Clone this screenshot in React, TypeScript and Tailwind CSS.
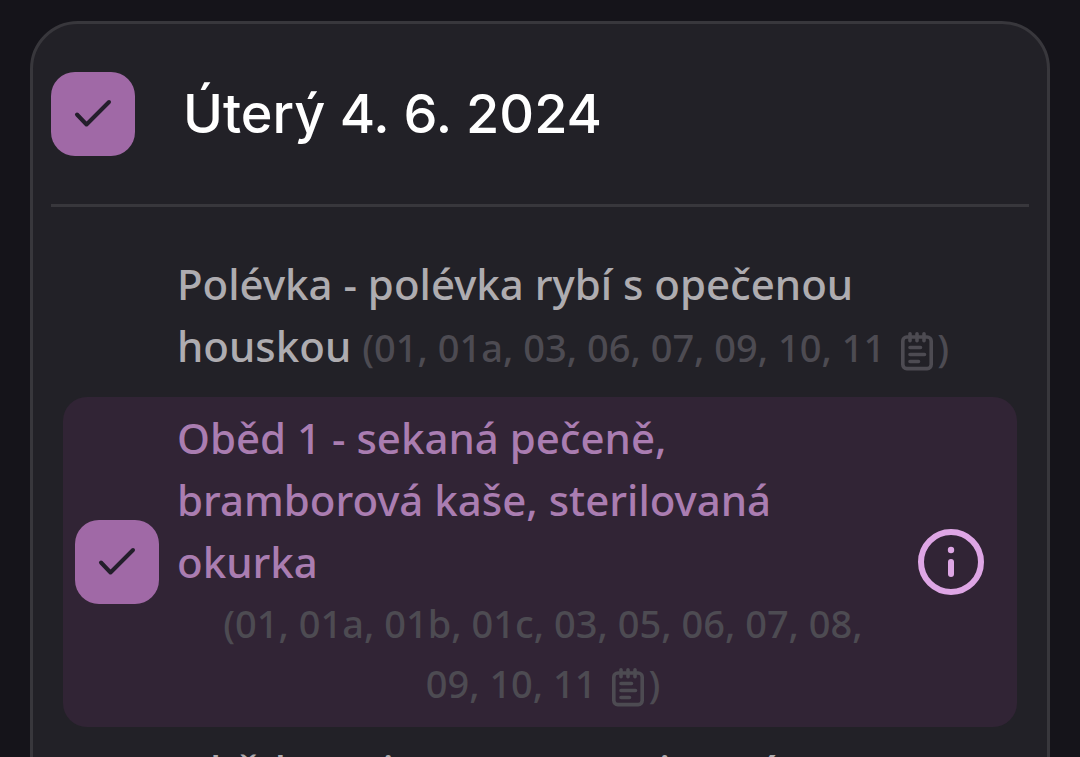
import { useId } from "react";
import type { ReactNode } from "react";

interface CheckProps {
  label: string;
}

function CheckBox({ label }: CheckProps) {
  const id = useId();

  return (
    <label htmlFor={id} aria-label={label} className="relative block size-21 shrink-0">
      <input
        id={id}
        type="checkbox"
        aria-label={label}
        defaultChecked
        className="peer block size-21 appearance-none rounded-3xl bg-[#412b48] checked:bg-[#a069a6]"
      />
      <svg
        viewBox="0 0 84 84"
        fill="none"
        stroke="#231e2b"
        strokeWidth="4"
        strokeLinecap="round"
        strokeLinejoin="round"
        className="pointer-events-none absolute inset-0 hidden size-21 peer-checked:block"
      >
        <path d="M26 42.5 35.5 52.5 58 30" />
      </svg>
    </label>
  );
}

function NotesIcon() {
  return (
    <svg
      viewBox="0 0 32 40"
      fill="none"
      stroke="currentColor"
      strokeWidth="3.6"
      strokeLinecap="round"
      strokeLinejoin="round"
      className="mr-1 ml-1.5 inline-block h-10 w-8 align-middle"
    >
      <rect x="1.8" y="5" width="28.4" height="31.6" rx="4" />
      <path d="M9 1.8v7M16 1.8v7M23 1.8v7M9 15.5h10.5M9 22.5h14.5M9 29.5h8.5" />
    </svg>
  );
}

function Allergens({ codes }: { codes: string }) {
  return (
    <button type="button" className="inline text-[38px] leading-15 font-medium text-[#4d4b52]">
      ({codes} <NotesIcon />)
    </button>
  );
}

interface MealProps {
  children: ReactNode;
  ordered?: boolean;
}

function Meal({ children, ordered }: MealProps) {
  return (
    <li
      className={
        ordered
          ? "flex items-center rounded-3xl bg-[#312435] px-3 py-2.5 text-[#aa7db1]"
          : "flex items-center px-3 pt-2 pb-[11px] text-[#aeacb0]"
      }
    >
      <div className="w-25.5 shrink-0">{ordered && <CheckBox label="Oběd 1" />}</div>
      <div className="min-w-0 flex-1 pb-1 text-[42px] leading-[62px] font-medium">{children}</div>
      {ordered && (
        <button type="button" aria-label="Informace" className="mr-5 ml-2 shrink-0 text-[#dea6e5]">
          <svg viewBox="0 0 68 68" fill="none" stroke="currentColor" className="size-17">
            <circle cx="34" cy="34" r="30" strokeWidth="6" />
            <path d="M34 34v12" strokeWidth="6" strokeLinecap="round" />
            <circle cx="34" cy="22" r="3.2" fill="currentColor" stroke="none" />
          </svg>
        </button>
      )}
    </li>
  );
}

export default function App() {
  return (
    <main className="h-screen overflow-hidden bg-[#15141a] px-[30px] pt-[21px] font-['Noto_Sans',sans-serif]">
      <section className="rounded-[48px] border-3 border-[#38373c] bg-[#222127] px-[18px] pt-12 pb-12">
        <header className="flex items-center gap-12 border-b-3 border-[#38373c] pb-12">
          <CheckBox label="Úterý 4. 6. 2024" />
          <h1 className="text-[54px] leading-21 font-medium text-white font-['Inter',sans-serif]">
            Úterý 4. 6. 2024
          </h1>
        </header>
        <ul className="flex flex-col gap-[5px] px-3 pt-[38px]">
          <Meal>
            Polévka - polévka rybí s opečenou houskou{" "}
            <Allergens codes="01, 01a, 03, 06, 07, 09, 10, 11" />
          </Meal>
          <Meal ordered>
            <p>Oběd 1 - sekaná pečeně, bramborová kaše, sterilovaná okurka</p>
            <p className="px-5 text-center leading-15">
              <Allergens codes="01, 01a, 01b, 01c, 03, 05, 06, 07, 08, 09, 10, 11" />
            </p>
          </Meal>
          <Meal>Oběd 2 - pizza s masem i se sýrem</Meal>
        </ul>
      </section>
    </main>
  );
}
